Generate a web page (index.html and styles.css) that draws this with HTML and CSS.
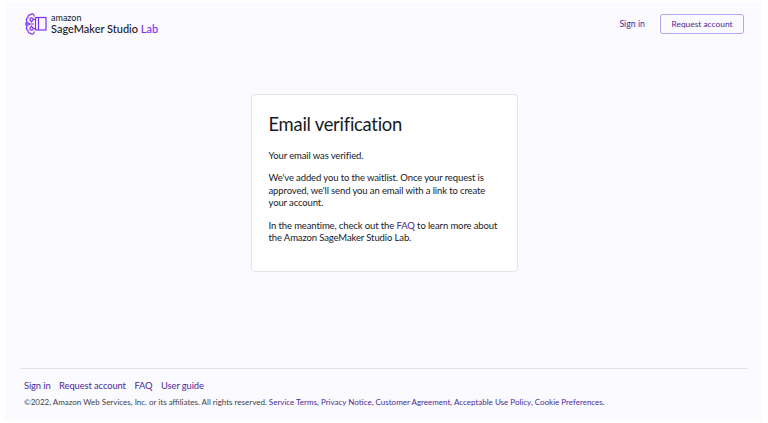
FILE: index.html
```html
<!DOCTYPE html>
<html lang="en">
<head>
<meta charset="utf-8">
<title>Email verification</title>
<link rel="stylesheet" href="styles.css">
</head>
<body>
<div class="page">
  <header class="top">
    <a class="logo" href="#">
      <svg class="logo-icon" width="22" height="22" viewBox="0 0 22 22" fill="none" stroke="#7b2ff2" stroke-width="1.200">
        <path d="M9 3.500V2.500a1.800 1.800 0 0 0-3.300-.8A2.500 2.500 0 0 0 3 4.500 2.600 2.600 0 0 0 2 8.500a3 3 0 0 0-1 2.500 3 3 0 0 0 1 2.500 2.600 2.600 0 0 0 1 4 2.500 2.500 0 0 0 2.700 2.800A1.800 1.800 0 0 0 9 19.500v-1"/>
        <circle cx="6.500" cy="6.500" r="1.600"/>
        <circle cx="6.500" cy="15.500" r="1.600"/>
        <circle cx="3" cy="11" r="1.200"/>
        <path d="M4.200 11H9M6.500 8.100v1.400M6.500 12.500v1.400M8 6.500h2.500M8 15.500h2.500"/>
        <rect x="10.500" y="4.500" width="10.500" height="12.500"/>
        <path d="M13.500 4.500v12.500"/>
      </svg>
      <span class="logo-text">
        <span class="logo-amazon">amazon</span>
        <span class="logo-name">SageMaker Studio <span class="logo-lab">Lab</span></span>
      </span>
    </a>
    <nav class="top-nav">
      <a class="top-link" href="#">Sign in</a>
      <a class="top-button" href="#">Request account</a>
    </nav>
  </header>
  <main class="main">
    <section class="card">
      <h1>Email verification</h1>
      <p>Your email was verified.</p>
      <p>We've added you to the waitlist. Once your request is approved, we'll send you an email with a link to create your account.</p>
      <p>In the meantime, check out the <a href="#">FAQ</a> to learn more about the Amazon SageMaker Studio Lab.</p>
    </section>
  </main>
  <footer class="foot">
    <div class="foot-links">
      <a href="#">Sign in</a>
      <a href="#">Request account</a>
      <a href="#">FAQ</a>
      <a href="#">User guide</a>
    </div>
    <p class="legal">©2022, Amazon Web Services, Inc. or its affiliates. All rights reserved. <a href="#">Service Terms</a>, <a href="#">Privacy Notice</a>, <a href="#">Customer Agreement</a>, <a href="#">Acceptable Use Policy</a>, <a href="#">Cookie Preferences</a>.</p>
  </footer>
</div>
</body>
</html>
```
FILE: styles.css
```css
* { box-sizing: border-box; }
html, body { height: 100%; }
body {
  margin: 0;
  background: #fff;
  font-family: Lato, Roboto, sans-serif;
  color: #16191f;
  overflow: hidden;
}
a { color: #4b2a96; text-decoration: none; }
.page {
  margin: 2px 6px 2px 5px;
  height: 419px;
  background: #fbfaff;
  display: flex;
  flex-direction: column;
}
.top {
  display: flex;
  justify-content: space-between;
  align-items: center;
  height: 43px;
  padding: 0 18px 0 20px;
  flex: none;
}
.logo { display: flex; align-items: center; gap: 4px; color: #16191f; }
.logo-text { display: flex; flex-direction: column; }
.logo-amazon { font-size: 9px; line-height: 9px; font-weight: 400; padding-top: 1px; }
.logo-name { font-size: 11px; line-height: 13px; font-weight: 500; }
.logo-lab { color: #7b2ff2; }
.top-nav { display: flex; align-items: center; gap: 15px; }
.top-link { font-size: 8.800px; }
.top-button {
  font-size: 8.400px;
  border: 1px solid #b9a3f5;
  border-radius: 3px;
  width: 84px;
  height: 20px;
  display: flex;
  align-items: center;
  justify-content: center;
}
.main { flex: 1; display: flex; justify-content: center; align-items: flex-start; padding-top: 49px; }
.card {
  width: 267px;
  height: 178px;
  margin-left: 1px;
  background: #fff;
  border: 1px solid #e3e3e8;
  border-radius: 4px;
  padding: 16px 17px;
}
h1 { margin: 0 0 12.500px; font-size: 18.400px; font-weight: 400; line-height: 26px; letter-spacing: -0.25px; }
.card p { margin: 0 0 10px; font-size: 9.500px; line-height: 12.600px; letter-spacing: -0.12px; }
.foot { flex: none; margin: 0 14px 0 15px; border-top: 1px solid #e3e3e5; height: 53px; padding: 10px 4px 0; }
.foot-links { display: flex; gap: 8.500px; font-size: 9.400px; line-height: 13px; letter-spacing: -0.1px; }
.legal { margin: 4px 0 0; font-size: 8px; line-height: 12px; color: #3b3f47; }
```
